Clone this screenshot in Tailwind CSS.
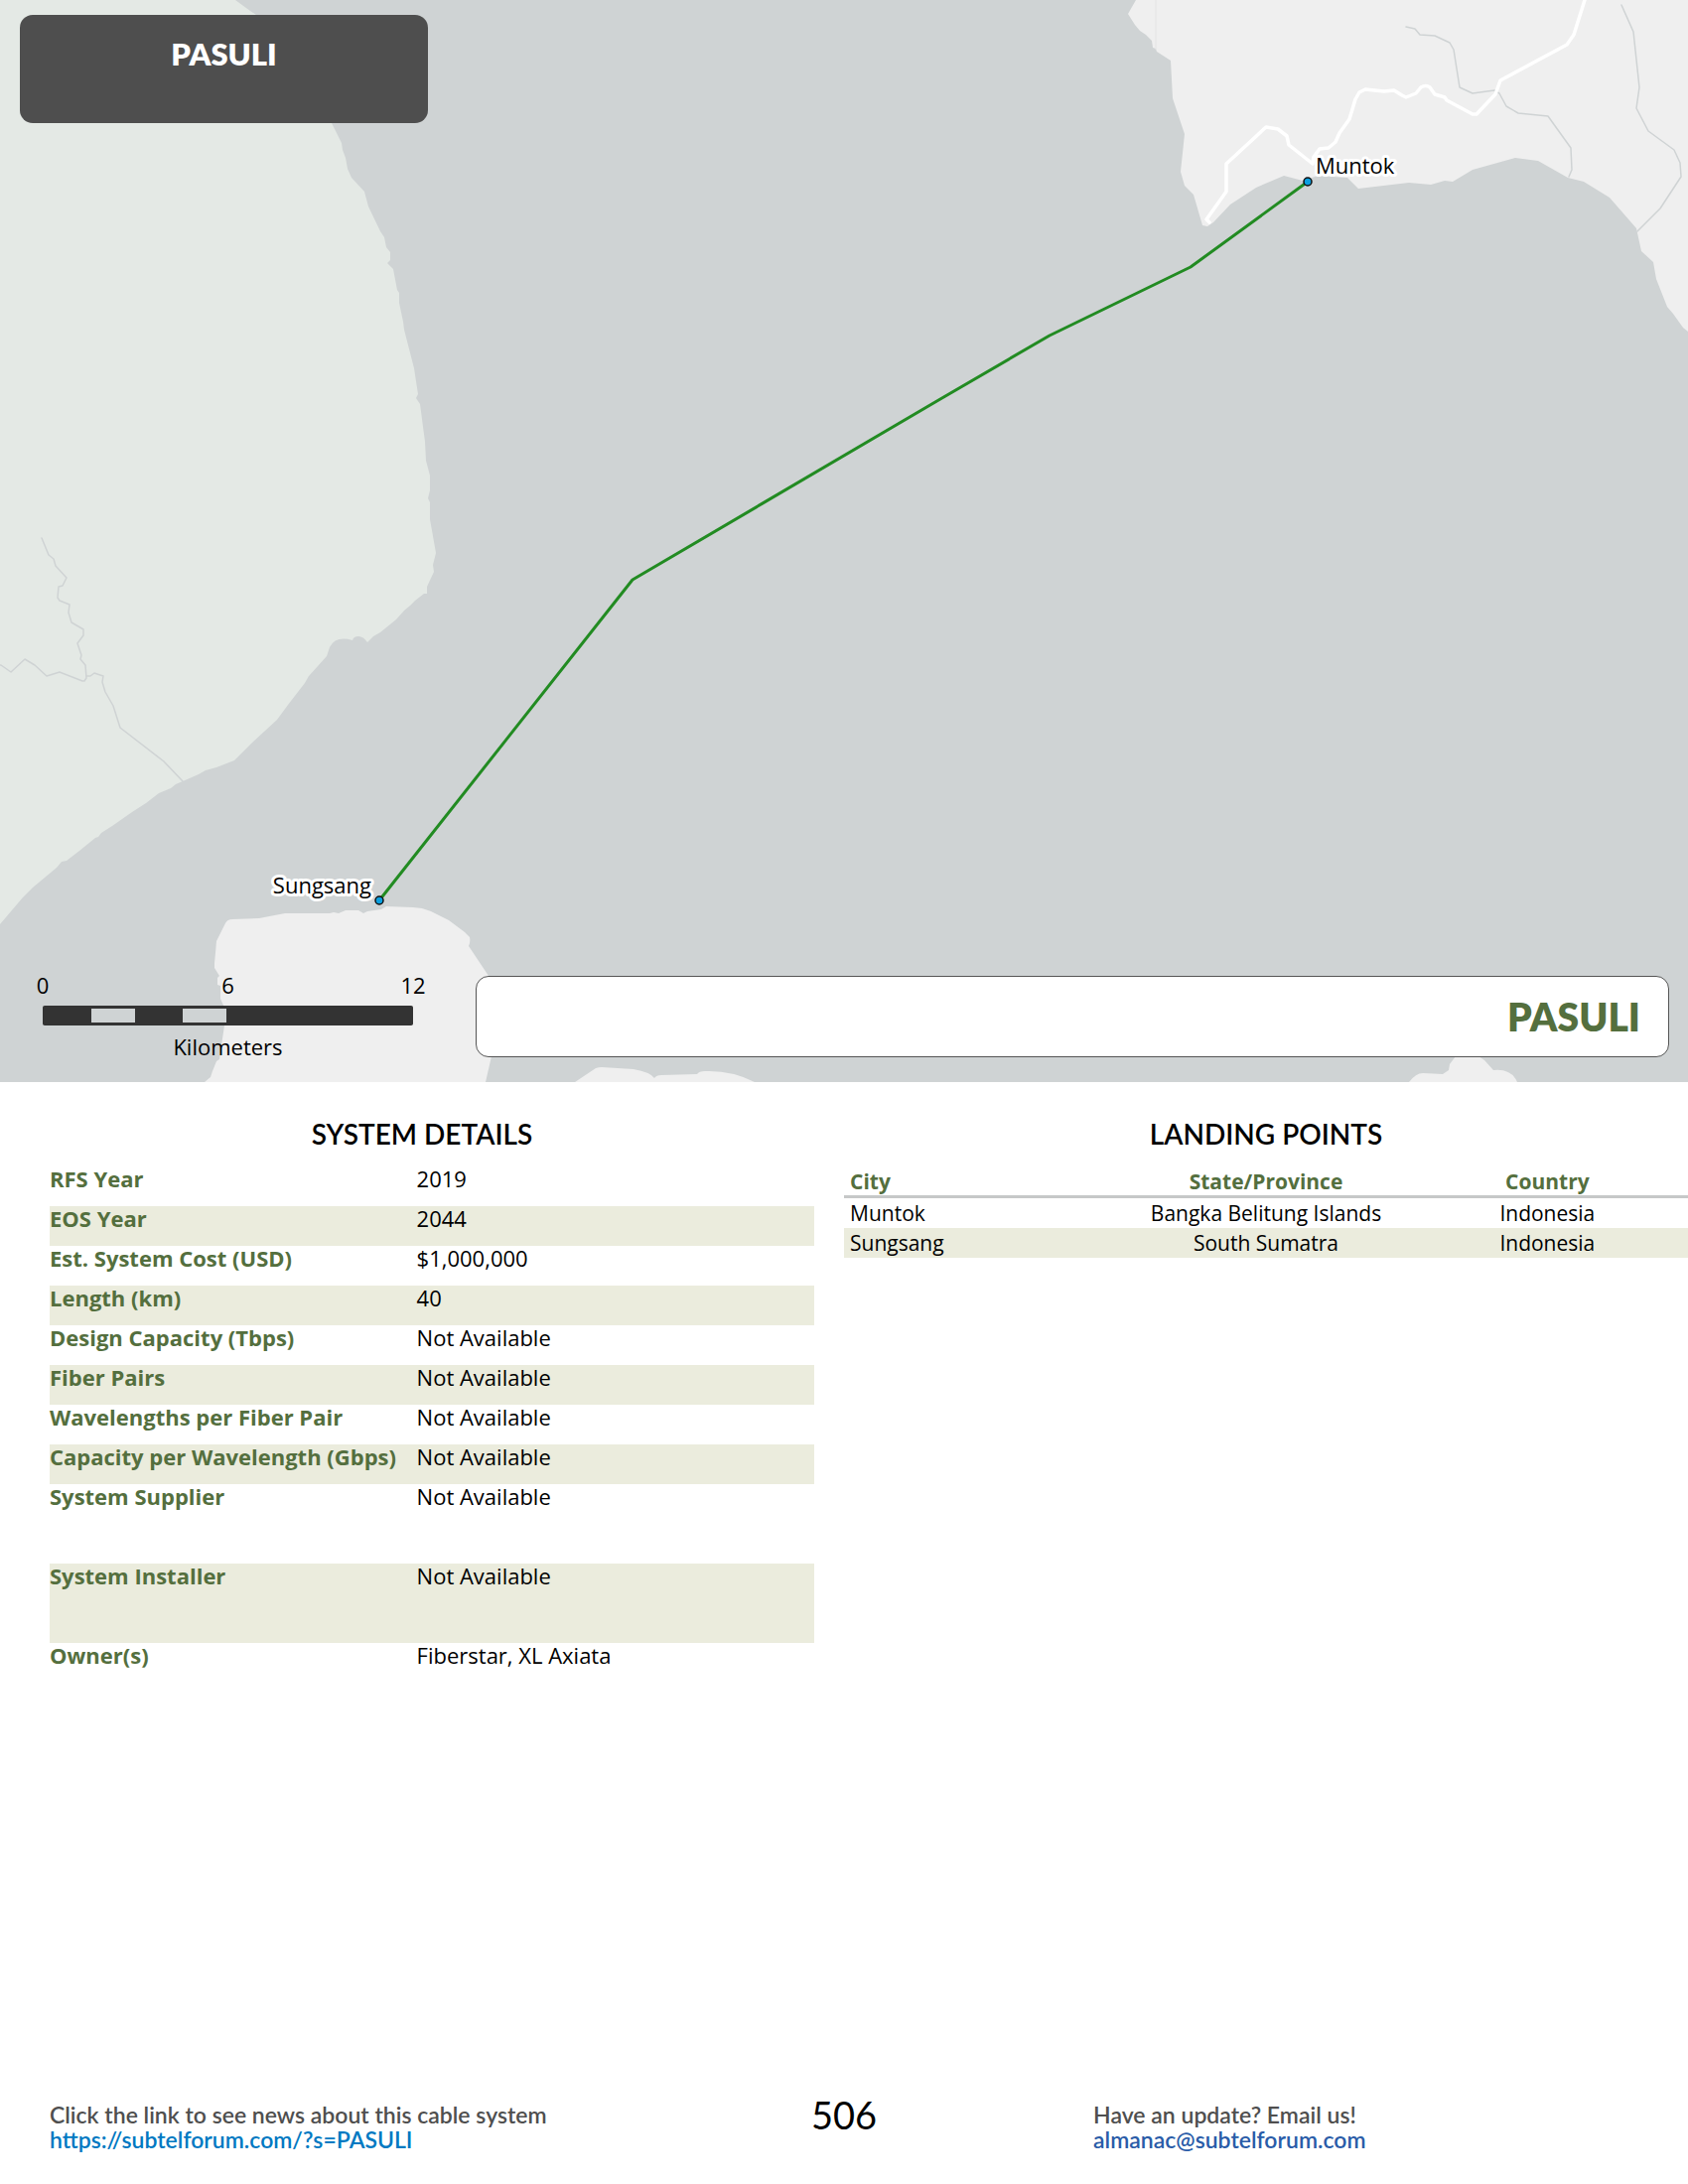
<!DOCTYPE html>
<html lang="en">
<head>
<meta charset="utf-8">
<meta name="viewport" content="width=device-width, initial-scale=1">
<title>PASULI</title>
<script src="https://cdn.jsdelivr.net/npm/@tailwindcss/browser@4"></script>
</head>
<body class="flex min-h-screen flex-col bg-white font-['Open_Sans',sans-serif] text-[22px] leading-[28px] text-black">

<header class="relative h-[1090px] overflow-hidden bg-[#cfd3d4]">
  <svg class="absolute inset-0 h-full w-full" viewBox="0 0 1700 1090" preserveAspectRatio="xMinYMin slice" role="img" aria-label="Cable route from Sungsang to Muntok">
    <!-- Sumatra coast -->
    <path fill="#e4e9e5" d="M0 0H237L252 11 258 15 300 70 334 124 344 144 345 151 348 159 350 170 354 179 367 193 371 208 383 233 387 239 389 249 393 254V262L390 265 396 271 400 292 402 295V305L406 324 407 332 417 371 421 397 419 401 423 407 428 445 429 464 433 479V494L431 502 433 506V523L439 557 436 569 437 576 430 591V598H427L418 605 413 610 407 615 399 624 383 637 376 641 370 647Q366 641 361 641T355 645Q338 640 332 652L329 661 311 681 307 688 290 710 279 725 253 749 236 766 218 773 207 776 200 780 184 787 177 790 172 794 160 799 147 809 133 818 113 832 102 839 99 843 96 844 80 857 67 867 62 868 57 874 33 894 23 904 0 931Z"/>
    <g fill="#efefef">
      <path d="M1144 0 1136 14 1143 25 1148 31 1154 35 1160 41 1161 48 1164 49 1165 52 1179 61 1181 99 1193 135 1189 173 1193 187 1202 196 1211 227 1216 228 1222 224 1239 206 1265 189 1293 177 1312 182 1327 177 1357 179 1368 190 1419 184 1441 186 1455 182 1463 183 1483 171 1526 159 1549 162 1579 179 1595 183 1621 199 1648 230 1653 253 1665 264 1668 281 1679 309 1685 316 1695 330 1700 334V0Z"/>
      <path d="M206 1090 212 1085 214 1079 218 1069 221 1067 223 1053 226 1033V1015L222 1006V993L219 992V985L221 983 216 975V970L217 960 218 948 223 938 227 930Q229 926 234 926L261 925 287 920H332L336 919 341 920 348 917H361L366 920 370 918 384 916 389 913 416 914 425 915 434 918 452 927 468 939 473 944Q474 949 472 953L492 983 500 1000 495 1064 489 1090Z"/>
      <path d="M579 1090 600 1076Q603 1075 606 1075L638 1077Q655 1080 659 1086 661 1083 666 1083L702 1082Q704 1079 710 1079 737 1078 760 1090Z"/>
      <path d="M1419 1090Q1426 1081 1433 1081L1453 1082 1459 1078 1460 1072 1466 1064H1489L1495 1068 1504 1078Q1522 1076 1528 1090Z"/>
    </g>
    <path d="M1164 0V50" stroke="#e4e4e4" fill="none"/>
    <!-- rivers -->
    <g fill="none" stroke="#cfd3d4" stroke-width="1.5" stroke-linejoin="round" stroke-linecap="round">
      <path d="M42 542 49 559 54 563 56 570 67 582 63 590 59 591 58 602 60 605 70 609 69 617 72 627 84 634V640L78 648 82 660 81 664 86 670 87 683 85 686H83L60 677 47 681 35 670 25 664 11 677 1 670H0"/>
      <path d="M87 681H91L95 678 104 681 103 687 106 697 114 711 121 733 165 767 184 787"/>
      <path d="M1416 27 1425 29 1430 35 1445 36 1460 43 1464 50 1470 88 1483 94 1505 91 1510 94 1517 107 1529 114 1559 117 1582 149 1583 171 1580 178"/>
      <path d="M1633 5 1645 32 1651 88 1648 109 1660 132 1686 151 1692 164 1693 178 1672 210 1649 233"/>
    </g>
    <!-- roads -->
    <path fill="none" stroke="#fff" stroke-width="3.5" stroke-linejoin="round" stroke-linecap="round" d="M1596 0 1585 35 1578 45 1511 81 1506 95 1487 115H1483L1457 101 1455 98 1445 95 1440 88Q1436 85 1431 88L1426 94 1416 98 1412 96 1404 91 1394 92 1375 90 1369 93 1365 100 1359 120 1349 134 1345 143 1338 149 1329 150 1323 158 1322 165 1298 146 1296 137 1287 130 1275 128 1235 165V193L1215 221 1218 224"/>
    <!-- cable -->
    <path fill="none" stroke="#228b22" stroke-width="3" stroke-linejoin="round" d="M382 907 637 584 947 402 1057 338 1199 269 1317 183"/>
    <g fill="#0a9fdf" stroke="#111" stroke-width="1.5">
      <circle cx="382" cy="907" r="4"/>
      <circle cx="1317" cy="183" r="4"/>
    </g>
    <g class="font-['Open_Sans',sans-serif] text-[22px]" fill="#000" stroke="#fff" stroke-width="6" stroke-linejoin="round" paint-order="stroke">
      <text x="1325" y="175">Muntok</text>
      <text x="374" y="900" text-anchor="end">Sungsang</text>
    </g>
  </svg>

  <div class="relative flex h-full flex-col justify-between pt-[15px] pr-[19px] pb-[18px] pl-5">
    <div class="h-[109px] w-[411px] rounded-[13px] bg-[#4e4e4e] pt-5 text-center font-['Lato',sans-serif] text-[31px] leading-[38px] font-extrabold text-white">PASULI</div>

    <div class="flex items-end justify-between">
      <div class="mb-1 ml-[23px] w-[373px]">
        <div class="-mx-4 flex justify-between text-center leading-[28px]">
          <span class="w-8">0</span><span class="w-8">6</span><span class="w-8">12</span>
        </div>
        <div class="mt-[7px] flex h-5 rounded-[2px] border-y-[3px] border-[#333] bg-[#333]">
          <span class="w-[49px]"></span><span class="w-11 bg-[#cfd3d4]"></span><span class="w-12"></span><span class="w-11 bg-[#cfd3d4]"></span>
        </div>
        <div class="mt-[7px] text-center leading-[28px]">Kilometers</div>
      </div>
      <div class="mb-[7px] ml-[63px] flex h-[82px] grow items-center justify-end rounded-[13px] border border-[#555] bg-white pr-7">
        <h1 class="font-['Lato',sans-serif] text-[39px] leading-[46px] font-extrabold text-[#546f3e]">PASULI</h1>
      </div>
    </div>
  </div>
</header>

<main class="grid grid-cols-2 pt-[34px]">
  <section class="pr-[30px] pl-[50px]">
    <h2 class="-mr-[30px] -ml-[50px] text-center font-['Lato',sans-serif] text-[28px] leading-[36px] font-semibold">SYSTEM DETAILS</h2>
    <table class="mt-[15px] w-full table-fixed text-left leading-[25px] [&_td]:p-0 [&_td]:align-top [&_th]:p-0 [&_th]:align-top [&_th]:font-bold [&_th]:text-[#546f3e]">
      <colgroup><col class="w-[48%]"><col></colgroup>
      <tbody>
        <tr class="h-10"><th scope="row">RFS Year</th><td>2019</td></tr>
        <tr class="h-10 bg-[#ebecdd]"><th scope="row">EOS Year</th><td>2044</td></tr>
        <tr class="h-10"><th scope="row">Est. System Cost (USD)</th><td>$1,000,000</td></tr>
        <tr class="h-10 bg-[#ebecdd]"><th scope="row">Length (km)</th><td>40</td></tr>
        <tr class="h-10"><th scope="row">Design Capacity (Tbps)</th><td>Not Available</td></tr>
        <tr class="h-10 bg-[#ebecdd]"><th scope="row">Fiber Pairs</th><td>Not Available</td></tr>
        <tr class="h-10"><th scope="row">Wavelengths per Fiber Pair</th><td>Not Available</td></tr>
        <tr class="h-10 bg-[#ebecdd]"><th scope="row">Capacity per Wavelength (Gbps)</th><td>Not Available</td></tr>
        <tr class="h-20"><th scope="row">System Supplier</th><td>Not Available</td></tr>
        <tr class="h-20 bg-[#ebecdd]"><th scope="row">System Installer</th><td>Not Available</td></tr>
        <tr class="h-10"><th scope="row">Owner(s)</th><td>Fiberstar, XL Axiata</td></tr>
      </tbody>
    </table>
  </section>

  <section>
    <h2 class="text-center font-['Lato',sans-serif] text-[28px] leading-[36px] font-semibold">LANDING POINTS</h2>
    <table class="mt-4 w-full table-fixed text-center text-[21px] leading-[30px] [&_td]:p-0 [&_th]:p-0">
      <thead>
        <tr class="border-b-[3px] border-[#c6c8c8] leading-[28px] text-[#546f3e]">
          <th scope="col" class="text-left"><span class="pl-[6px]">City</span></th><th scope="col">State/Province</th><th scope="col">Country</th>
        </tr>
      </thead>
      <tbody>
        <tr><td class="text-left"><span class="pl-[6px]">Muntok</span></td><td>Bangka Belitung Islands</td><td>Indonesia</td></tr>
        <tr class="bg-[#ebecdd]"><td class="text-left"><span class="pl-[6px]">Sungsang</span></td><td>South Sumatra</td><td>Indonesia</td></tr>
      </tbody>
    </table>
  </section>
</main>

<footer class="mt-auto grid grid-cols-[1fr_auto_1fr] items-start px-[50px] pb-[32px] font-['Lato',sans-serif] text-[23px] leading-[25px] font-semibold text-[#4f4f4f]">
  <div>
    <p>Click the link to see news about this cable system</p>
    <a class="text-[#0079c2]" href="https://subtelforum.com/?s=PASULI">https://subtelforum.com/?s=PASULI</a>
  </div>
  <div class="text-[38px] leading-[25px] font-normal text-black">506</div>
  <div class="pl-[218px]">
    <p>Have an update? Email us!</p>
    <a class="text-[#2a5ca8]" href="mailto:almanac@subtelforum.com">almanac@subtelforum.com</a>
  </div>
</footer>
</body>
</html>
